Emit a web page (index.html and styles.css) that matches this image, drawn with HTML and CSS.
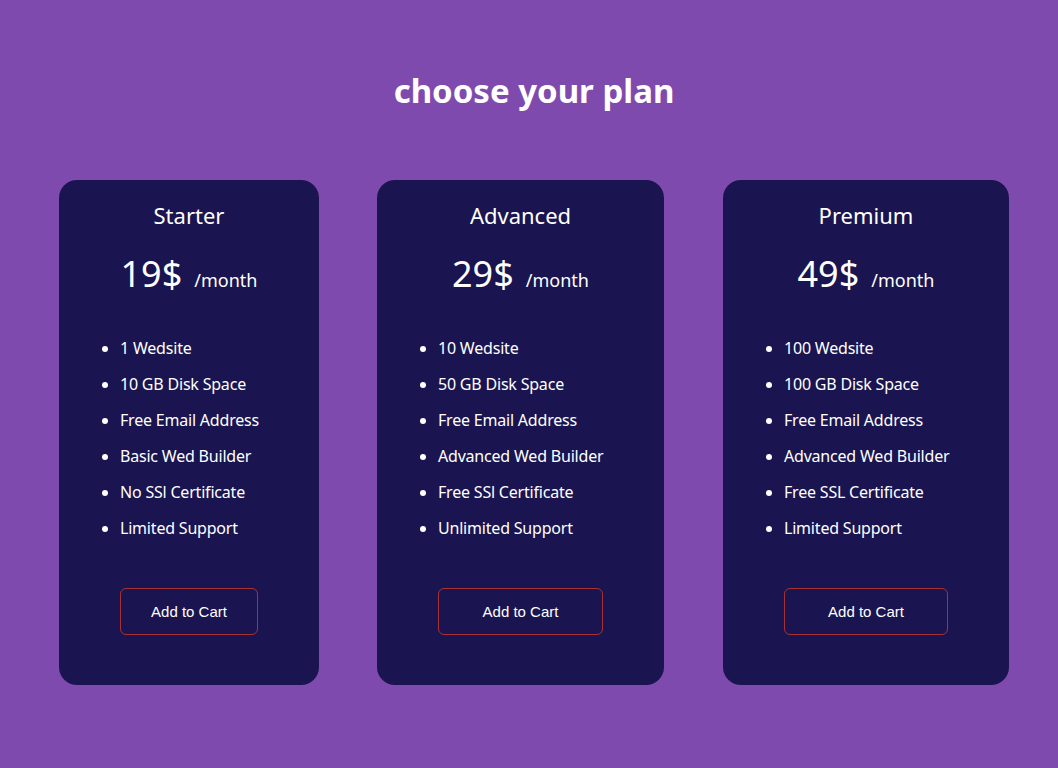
FILE: index.html
```html
<!DOCTYPE html>
<html lang="en">
<head>
<meta charset="utf-8">
<title>Pricing</title>
<link rel="stylesheet" href="styles.css">
</head>
<body>
<h1 class="title">choose your plan</h1>
<div class="plans">
  <div class="card card-starter">
    <h2 class="card-name">Starter</h2>
    <div class="price"><span class="amount">19$</span><span class="period">/month</span></div>
    <ul class="features">
      <li>1 Wedsite</li>
      <li>10 GB Disk Space</li>
      <li>Free Email Address</li>
      <li>Basic Wed Builder</li>
      <li>No SSl Certificate</li>
      <li>Limited Support</li>
    </ul>
    <button class="cart-btn">Add to Cart</button>
  </div>
  <div class="card card-advanced">
    <h2 class="card-name">Advanced</h2>
    <div class="price"><span class="amount">29$</span><span class="period">/month</span></div>
    <ul class="features">
      <li>10 Wedsite</li>
      <li>50 GB Disk Space</li>
      <li>Free Email Address</li>
      <li>Advanced Wed Builder</li>
      <li>Free SSl Certificate</li>
      <li>Unlimited Support</li>
    </ul>
    <button class="cart-btn">Add to Cart</button>
  </div>
  <div class="card card-premium">
    <h2 class="card-name">Premium</h2>
    <div class="price"><span class="amount">49$</span><span class="period">/month</span></div>
    <ul class="features">
      <li>100 Wedsite</li>
      <li>100 GB Disk Space</li>
      <li>Free Email Address</li>
      <li>Advanced Wed Builder</li>
      <li>Free SSL Certificate</li>
      <li>Limited Support</li>
    </ul>
    <button class="cart-btn">Add to Cart</button>
  </div>
</div>
</body>
</html>
```

FILE: styles.css
```css
html, body {
  margin: 0;
  padding: 0;
}
body {
  background: #7f4aad;
  font-family: "Noto Sans", "Noto Sans CJK KR", sans-serif;
  color: #ffffff;
  min-height: 768px;
}
.title {
  margin: 71px 0 69px 10px;
  font-size: 33px;
  line-height: 40px;
  font-weight: 700;
  text-align: center;
}
.plans {
  display: flex;
  align-items: flex-start;
  gap: 58px;
  padding-left: 59px;
}
.card {
  box-sizing: border-box;
  background: #1a1550;
  border-radius: 18px;
  padding: 20px 61px 50px;
  display: flex;
  flex-direction: column;
  align-items: stretch;
}
.card-starter { width: 260px; }
.card-advanced { width: 287px; }
.card-premium { width: 286px; margin-left: 1px; }
.card-name {
  margin: 0;
  font-size: 22px;
  line-height: 30px;
  font-weight: 400;
  text-align: center;
}
.price {
  margin-top: 21px;
  text-align: center;
  white-space: nowrap;
}
.amount {
  font-size: 36px;
  line-height: 46px;
}
.period {
  font-size: 18px;
  margin-left: 12px;
}
.features {
  margin: 33px 0 42px;
  padding: 0;
  list-style: disc outside;
  white-space: nowrap;
}
.features li {
  font-size: 16px;
  line-height: 36px;
  letter-spacing: -0.2px;
}
.cart-btn {
  height: 47px;
  background: transparent;
  border: 1px solid #a83232;
  border-radius: 6px;
  color: #ffffff;
  font-family: "Liberation Sans", Arial, sans-serif;
  font-size: 15px;
  cursor: pointer;
}
```
